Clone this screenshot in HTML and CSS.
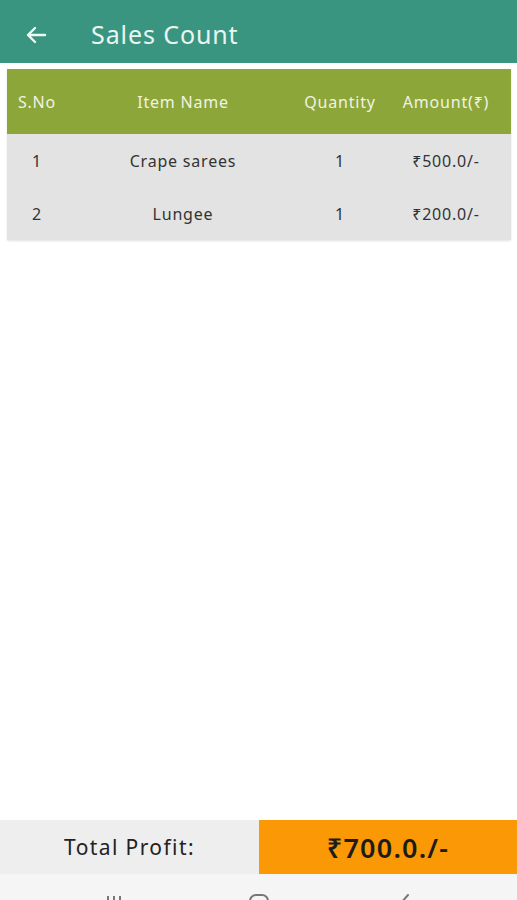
FILE: index.html
```html
<!DOCTYPE html>
<html lang="en">
<head>
  <meta charset="UTF-8">
  <meta name="viewport" content="width=device-width, initial-scale=1.0">
  <title>Sales Count</title>
  <link rel="stylesheet" href="styles.css">
</head>
<body>
  <div id="app">
    <div id="toolbar">
      <button id="backBtn" aria-label="Back">
        <svg width="22" height="18" viewBox="0 0 22 18"><path d="M20 9H3M10 2L3 9l7 7" fill="none" stroke="currentColor" stroke-width="2.4" stroke-linecap="round" stroke-linejoin="round"/></svg>
      </button>
      <div id="toolbarTitle">Sales Count</div>
    </div>

    <div id="salesTable">
      <div class="fila cabecera">
        <div class="col c1">S.No</div>
        <div class="col c2">Item Name</div>
        <div class="col c3">Quantity</div>
        <div class="col c4">Amount(₹)</div>
      </div>
      <div class="fila">
        <div class="col c1">1</div>
        <div class="col c2">Crape sarees</div>
        <div class="col c3">1</div>
        <div class="col c4">₹500.0/-</div>
      </div>
      <div class="fila">
        <div class="col c1">2</div>
        <div class="col c2">Lungee</div>
        <div class="col c3">1</div>
        <div class="col c4">₹200.0/-</div>
      </div>
    </div>

    <div class="espacio"></div>

    <div id="totalBar">
      <div class="total-label">Total Profit:</div>
      <div class="total-value">₹700.0./-</div>
    </div>

    <div id="navBar">
      <svg class="nav-icon" width="24" height="20" viewBox="0 0 24 20"><path d="M6 4v16M12 4v16M18 4v16" stroke="#777" stroke-width="2"/></svg>
      <svg class="nav-icon" width="24" height="20" viewBox="0 0 24 20"><rect x="3" y="3" width="18" height="18" rx="6" fill="none" stroke="#777" stroke-width="2"/></svg>
      <svg class="nav-icon" width="24" height="20" viewBox="0 0 24 20"><path d="M16 3l-7 8" fill="none" stroke="#777" stroke-width="2" stroke-linecap="round"/></svg>
    </div>
  </div>
</body>
</html>
```

FILE: styles.css
```css
body {
  margin: 0;
  font-family: "Noto Sans", "Open Sans", "DejaVu Sans", sans-serif;
  background: #ffffff;
}
#app {
  height: 100vh;
  display: flex;
  flex-direction: column;
  overflow: hidden;
}
#toolbar {
  height: 63px;
  box-sizing: border-box;
  padding-top: 6px;
  background: #3a9580;
  display: flex;
  align-items: center;
  flex-shrink: 0;
}
#backBtn {
  background: transparent;
  border: none;
  color: #eef7f3;
  padding: 0;
  margin-left: 25px;
  width: 22px;
  height: 18px;
  display: flex;
}
#toolbarTitle {
  margin-left: 44px;
  color: #e9f5f0;
  font-size: 25px;
  letter-spacing: 0.9px;
  padding-bottom: 2px;
}
#salesTable {
  margin: 6px 6px 0 7px;
  box-shadow: 0 1px 2px rgba(0,0,0,0.12);
}
.fila {
  display: flex;
  align-items: center;
  height: 53px;
  background: #e3e3e3;
  color: #333333;
  font-size: 16px;
  letter-spacing: 0.8px;
}
.fila.cabecera {
  height: 65px;
  background: #8ca63a;
  color: #f1f3e2;
}
.col {
  text-align: center;
  white-space: nowrap;
}
.c1 { width: 60px; }
.c2 { width: 232px; }
.c3 { width: 82px; }
.c4 { width: 130px; }
.espacio {
  flex: 1;
}
#totalBar {
  display: flex;
  height: 54px;
  flex-shrink: 0;
}
.total-label {
  width: 259px;
  background: #eeeeee;
  color: #222222;
  font-size: 21px;
  letter-spacing: 1.4px;
  display: flex;
  align-items: center;
  justify-content: center;
}
.total-value {
  flex: 1;
  background: #fb9805;
  color: #1c1c1c;
  font-size: 27px;
  font-weight: 600;
  letter-spacing: 1.2px;
  display: flex;
  align-items: center;
  justify-content: center;
}
#navBar {
  height: 26px;
  background: #f5f5f5;
  display: flex;
  justify-content: center;
  gap: 121px;
  align-items: flex-end;
  overflow: hidden;
  flex-shrink: 0;
}
.nav-icon {
  margin-bottom: -12px;
}
```
